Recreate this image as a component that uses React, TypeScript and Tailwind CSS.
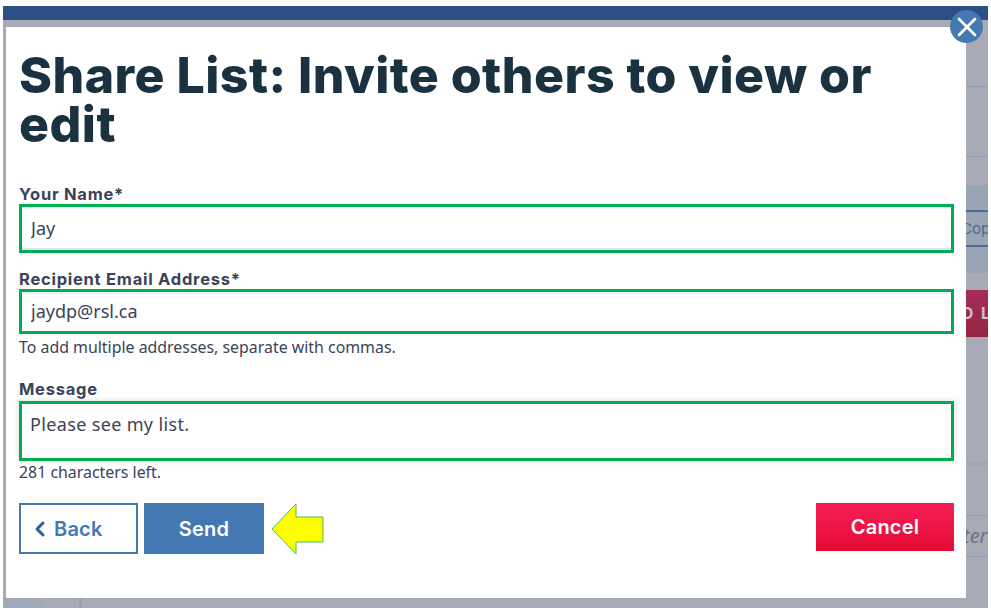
import React from 'react';
import { X, ChevronLeft } from 'lucide-react';

const bodyFont = "font-['Noto_Sans','Open_Sans',sans-serif]";
const headFont = "font-['Inter','Noto_Sans',sans-serif]";

const labelClass = "block font-['Inter',sans-serif] text-[16.5px] font-bold leading-[18px] tracking-[0.75px] text-[#3a4358]";
const fieldClass =
  "w-full border-[3px] border-[#00ad50] bg-white text-[18px] text-[#3a4358] outline-none font-['Noto_Sans',sans-serif]";

const ShareModal: React.FC = () => {
  return (
    <div className="absolute left-[6px] top-[27px] h-[571px] w-[960px] bg-white pl-[13px] pr-[12px]">
      <button className="absolute -right-[17px] -top-[17px] flex h-[33px] w-[33px] items-center justify-center rounded-full bg-[#4378b3] text-white">
        <X className="h-8 w-8" strokeWidth={2} />
      </button>

      <h1 className="pt-[24px] font-['Inter',sans-serif] text-[50px] font-extrabold leading-[49px] tracking-[0.45px] text-[#1a3240]">
        Share List: Invite others to view or edit
      </h1>

      <form className="mt-[36px]">
        <label className={labelClass}>Your Name*</label>
        <input
          readOnly
          value="Jay"
          className={`${fieldClass} mt-[1px] h-[49px] px-[9px] pb-[2px] shadow-[inset_0_2px_0_#eaf3fd,inset_0_-2px_0_#d5e5f5]`}
        />

        <label className={`${labelClass} mt-[17px]`}>Recipient Email Address*</label>
        <input
          readOnly
          value="jaydp@rsl.ca"
          className={`${fieldClass} mt-[1px] h-[45px] px-[9px] pb-[2px] shadow-[inset_0_2px_0_#eaf3fd]`}
        />
        <p className={`${bodyFont} mt-[3px] text-[15.9px] leading-[20px] text-[#3a4358]`}>
          To add multiple addresses, separate with commas.
        </p>

        <label className={`${labelClass} mt-[23px]`}>Message</label>
        <textarea
          readOnly
          value="Please see my list."
          className={`${fieldClass} mt-[3px] block h-[60px] resize-none px-[8px] py-[8px] leading-[24px] tracking-[0.35px] shadow-[0_0_6px_rgba(0,0,0,0.15)]`}
        />
        <p className={`${bodyFont} mt-[1px] text-[15.9px] leading-[20px] text-[#3a4358]`}>281 characters left.</p>

        <div className="mt-[21px] flex items-start">
          <button
            type="button"
            className={`${headFont} flex h-[51px] w-[119px] items-center gap-[2px] border-2 border-[#4378b3] bg-white pl-[7px] text-[20px] font-semibold tracking-[0.2px] text-[#4378b3]`}
          >
            <ChevronLeft className="h-6 w-6 text-[#2a5f9e]" strokeWidth={3} />
            Back
          </button>
          <button
            type="button"
            className={`${headFont} ml-[6px] h-[51px] w-[120px] bg-[#4378b3] text-[20px] font-semibold tracking-[0.2px] text-white`}
          >
            Send
          </button>
          <svg className="ml-[7px]" width="54" height="52" viewBox="0 0 54 52">
            <polygon
              points="1,26 25,1 25,14 52,14 52,39 25,39 25,51"
              fill="#ffff00"
              stroke="#3fc35a"
              strokeWidth="1"
            />
          </svg>
          <button
            type="button"
            className={`${headFont} ml-auto h-[48px] w-[138px] bg-gradient-to-b from-[#f61c58] to-[#e40a30] text-[20px] font-semibold tracking-[0.2px] text-white`}
          >
            Cancel
          </button>
        </div>
      </form>
    </div>
  );
};

// page behind the overlay, only the strip right of the modal shows
const DimmedPage: React.FC = () => {
  return (
    <div className="mx-[3px] flex h-[602px] flex-col overflow-hidden bg-[#a8abb6]">
      <div className="h-[14px] shrink-0 bg-[#2c4f85]" />
      <div className="ml-[100px] flex h-[578px] shrink-0 flex-col">
        <div className="h-[67px] shrink-0 border-b border-[#8c9cb8]" />
        <div className="h-[70px] shrink-0 border-b border-[#8c9cb8]" />
        <div className="mt-[28px] flex h-[88px] shrink-0 flex-col bg-[#99a5b3] pt-[25px]">
          <div className="h-[37px] border-y-2 border-[#4a6a99] pl-[858px] font-['Inter',sans-serif] text-[15px] leading-[33px] whitespace-nowrap text-[#4a6a99]">
            Cop
          </div>
        </div>
        <div className="mt-[17px] h-[47px] shrink-0 bg-gradient-to-b from-[#a62c5c] to-[#952440] pl-[858px] font-['Inter',sans-serif] text-[16px] leading-[47px] font-bold tracking-[2px] whitespace-nowrap text-[#c9c3c8]">
          O L
        </div>
        <div className="mt-[125px] h-[3px] shrink-0 bg-[#9ea6b4]" />
        <div className="mt-[50px] h-[42px] shrink-0 border-y border-[#8c9cb8] pl-[860px] font-['Noto_Sans',sans-serif] text-[20px] leading-[40px] whitespace-nowrap text-[#6f7280] italic">
          ter
        </div>
      </div>
      <div className="flex h-[10px] shrink-0">
        <div className="w-[40px] bg-[#a0a9b8]" />
        <div className="ml-[36px] w-[3px] bg-[#96a3b5]" />
      </div>
    </div>
  );
};

export default function App() {
  return (
    <div className="relative h-[608px] w-[991px] overflow-hidden bg-white pt-[6px]">
      <DimmedPage />
      <ShareModal />
    </div>
  );
}
